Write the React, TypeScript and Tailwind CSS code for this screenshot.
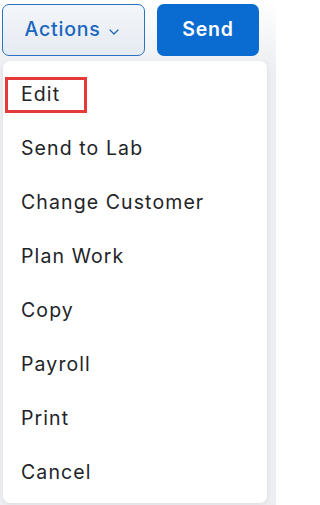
import React from "react";

const items = ["Edit", "Send to Lab", "Change Customer", "Plan Work", "Copy", "Payroll", "Print", "Cancel"];

export default function App() {
  return (
    <div
      className="relative w-[276px] h-[505px] overflow-hidden bg-gradient-to-b from-white to-[#eceef1] to-[70px] bg-[#eceef1]"
      style={{ fontFamily: "Inter, 'Noto Sans', sans-serif" }}
    >
      <div className="flex gap-[12px] pl-[2px] pt-[4px]">
        <button className="w-[143px] h-[52px] rounded-[7px] border border-[#2a72c4] bg-gradient-to-b from-[#f3f6fa] to-[#e6ebf2] text-[#1b67bd] text-[19.5px] tracking-[0.8px] font-medium flex items-center justify-center gap-[8px] pr-[4px]">
          <span>Actions</span>
          <svg width="10" height="6" viewBox="0 0 10 6" className="mt-[4px]">
            <path d="M1 1l4 4 4-4" fill="none" stroke="#1b67bd" strokeWidth="1.2" strokeLinecap="round" strokeLinejoin="round" />
          </svg>
        </button>
        <button className="w-[102px] h-[52px] rounded-[7px] bg-[#0a6bd0] text-white text-[19.5px] tracking-[0.8px] font-semibold flex items-center justify-center">
          Send
        </button>
      </div>
      <div className="absolute left-[3px] top-[61px] w-[264px] h-[442px] bg-white rounded-[7px] shadow-[0_1px_4px_rgba(0,0,0,0.08)] py-[7px]">
        <div className="absolute left-[2px] top-[16px] w-[82px] h-[36px] border-[3px] border-[#e53a3a]" />
        {items.map((t) => (
          <div key={t} className="h-[54px] flex items-center pl-[18px] text-[19.5px] tracking-[1.1px] text-[#222428]">
            {t}
          </div>
        ))}
      </div>
    </div>
  );
}
